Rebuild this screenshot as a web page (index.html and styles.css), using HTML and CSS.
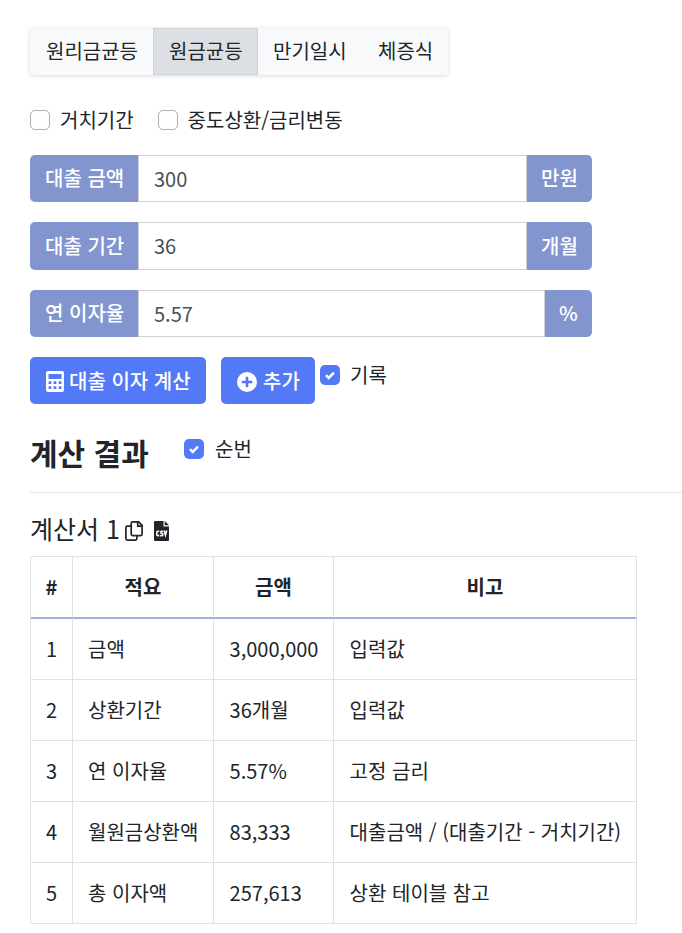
FILE: index.html
```html
<!DOCTYPE html>
<html lang="ko">
<head>
<meta charset="utf-8">
<title>대출 이자 계산기</title>
<link rel="stylesheet" href="styles.css">
</head>
<body>
<main class="page">
  <nav class="tabs">
    <a class="tab tab-first">원리금균등</a>
    <a class="tab active">원금균등</a>
    <a class="tab">만기일시</a>
    <a class="tab tab-last">체증식</a>
  </nav>

  <div class="options">
    <label class="check"><span class="box"></span>거치기간</label>
    <label class="check"><span class="box"></span>중도상환/금리변동</label>
  </div>

  <form class="fields">
    <div class="field"><span class="addon">대출 금액</span><span class="value">300</span><span class="addon unit">만원</span></div>
    <div class="field field-tall"><span class="addon">대출 기간</span><span class="value">36</span><span class="addon unit">개월</span></div>
    <div class="field"><span class="addon">연 이자율</span><span class="value">5.57</span><span class="addon unit unit-small">%</span></div>
  </form>

  <div class="actions">
    <button class="btn btn-calc" type="button">
      <svg class="icon-calc" viewBox="0 0 18 21"><path fill="#fff" fill-rule="evenodd" d="M2 0h14a2 2 0 0 1 2 2v17a2 2 0 0 1-2 2H2a2 2 0 0 1-2-2V2a2 2 0 0 1 2-2zM2.500 3v5h13V3zM2.600 10.300v2.700h2.700v-2.700zm5 0v2.700h2.700v-2.700zm5.100 0v2.700h2.700v-2.700zM2.600 15.300v2.700h2.700v-2.700zm5 0v2.700h2.700v-2.700zm5.100 0v2.700h2.700v-2.700z"/></svg>
      <span>대출 이자 계산</span>
    </button>
    <button class="btn btn-add" type="button">
      <svg class="icon-add" viewBox="0 0 20 20"><circle cx="10" cy="10" r="10" fill="#fff"/><path d="M10 4.700v10.600M4.700 10h10.600" stroke="#5379f6" stroke-width="2.600"/></svg>
      <span>추가</span>
    </button>
    <label class="check check-log"><span class="box checked"><svg viewBox="0 0 20 20"><path d="M6 10.200l2.700 2.700L14 7.600"/></svg></span>기록</label>
  </div>

  <header class="result-head">
    <h2>계산 결과</h2>
    <label class="check"><span class="box checked"><svg viewBox="0 0 20 20"><path d="M6 10.200l2.700 2.700L14 7.600"/></svg></span>순번</label>
  </header>

  <div class="caption">
    <span>계산서 1</span>
    <svg class="icon-copy" viewBox="0 0 18 20" fill="none" stroke="#212529" stroke-width="1.700" stroke-linejoin="round"><path d="M7.700.9h6l3.400 3.400v8.800a1.500 1.500 0 0 1-1.500 1.500H7.700a1.500 1.500 0 0 1-1.500-1.500V2.400A1.500 1.500 0 0 1 7.700.9z"/><path d="M12.700 1v4.200h4.200"/><path d="M6.200 5.200H2.400A1.500 1.500 0 0 0 .9 6.700v10.900a1.500 1.500 0 0 0 1.500 1.500h8a1.500 1.500 0 0 0 1.500-1.500v-3"/></svg>
    <svg class="icon-csv" viewBox="0 0 15 20"><path fill="#212529" d="M1 0h8.500v5.500H15V19a1 1 0 0 1-1 1H1a1 1 0 0 1-1-1V1a1 1 0 0 1 1-1z"/><path fill="#212529" d="M10.700 0L15 4.300h-4.300z"/><path fill="none" stroke="#fff" stroke-width="1.600" d="M5.200 10.200H4q-1.200 0-1.200 1.200v2q0 1.200 1.200 1.200h1.200M9 10.200H7.600q-.9 0-.9 1t.9 1.100h.3q.9 0 .9 1.100t-.9 1.200H6.200M10.100 9.500l1.300 4.500L12.700 9.500"/></svg>
  </div>

  <table class="sheet">
    <colgroup><col class="c-no"><col class="c-item"><col class="c-amount"><col class="c-note"></colgroup>
    <thead><tr><th>#</th><th>적요</th><th>금액</th><th>비고</th></tr></thead>
    <tbody>
      <tr><td>1</td><td>금액</td><td>3,000,000</td><td>입력값</td></tr>
      <tr><td>2</td><td>상환기간</td><td>36개월</td><td>입력값</td></tr>
      <tr><td>3</td><td>연 이자율</td><td>5.57%</td><td>고정 금리</td></tr>
      <tr><td>4</td><td>월원금상환액</td><td>83,333</td><td>대출금액 / (대출기간 - 거치기간)</td></tr>
      <tr><td>5</td><td>총 이자액</td><td>257,613</td><td>상환 테이블 참고</td></tr>
    </tbody>
  </table>
</main>
</body>
</html>
```
FILE: styles.css
```css
* { box-sizing: border-box; }
body {
  margin: 0;
  background: #fff;
  color: #212529;
  font: 20px/30px "Noto Sans CJK KR", sans-serif;
  overflow: hidden;
}
.page { padding: 28px 0 0 30px; }

.tabs {
  display: flex;
  width: 418px;
  height: 47px;
  background: #f8f9fb;
  box-shadow: 0 1px 4px rgba(33, 37, 41, .17);
}
.tab {
  width: 105px;
  padding: 8px 0 0 15px;
  white-space: nowrap;
}
.tab-first { width: 123px; padding-left: 16px; }
.tab-last { width: 85px; padding-left: 15px; }
.active { background: #dcdfe4; border: 1px solid #d1d4da; padding-top: 7px; }

.options { display: flex; gap: 24px; margin-top: 30px; }
.check { display: flex; align-items: center; gap: 10px; height: 30px; white-space: nowrap; }
.box {
  width: 20px;
  height: 20px;
  border: 1px solid #adb0b7;
  border-radius: 5px;
  background: #fff;
}
.checked { border: 0; background: #5379f6; }
.box svg { display: block; width: 20px; height: 20px; fill: none; stroke: #fff; stroke-width: 2.5; }

.fields { display: flex; flex-direction: column; gap: 20px; width: 562px; margin-top: 20px; }
.field { display: flex; height: 47px; }
.field-tall { height: 48px; }
.addon {
  width: 108px;
  padding: 8px 0 0 15px;
  background: #8295cf;
  color: #fff;
  font-weight: 500;
  border-radius: 5px 0 0 5px;
  white-space: nowrap;
}
.field-tall .addon { padding-top: 9px; }
.unit { width: 65px; padding-left: 14px; border-radius: 0 5px 5px 0; }
.unit-small { width: 47px; }
.value {
  flex: 1;
  padding: 8px 15px 0;
  border: 1px solid #cfd1d6;
  color: #495057;
}

.actions { display: flex; margin-top: 20px; }
.btn {
  display: flex;
  align-items: center;
  height: 47px;
  padding: 0 15px 0 16px;
  border: 0;
  border-radius: 5px;
  background: #5379f6;
  color: #fff;
  font: 500 20px/30px "Noto Sans CJK KR", sans-serif;
  white-space: nowrap;
}
.btn-calc { width: 176px; gap: 5px; }
.btn-add { width: 94px; margin-left: 15px; gap: 6px; }
.icon-calc { width: 18px; height: 21px; flex: none; margin-top: 2px; }
.icon-add { width: 20px; height: 20px; flex: none; margin-top: 2px; }
.check-log { margin: 3px 0 0 5px; }

.result-head {
  display: flex;
  align-items: flex-start;
  gap: 36px;
  height: 63px;
  margin-top: 26px;
  border-bottom: 1px solid #e1e3e6;
}
h2 { margin: 2px 0 0; font-size: 30px; line-height: 40px; font-weight: 700; width: 118px; white-space: nowrap; }
.result-head .check { margin-top: 4px; gap: 11px; }

.caption { display: flex; height: 63px; padding-top: 20px; font-size: 25px; line-height: 30px; }
.icon-copy { width: 18px; height: 20px; margin: 8px 0 0 5px; }
.icon-csv { width: 15px; height: 20px; margin: 8px 0 0 11px; }

.sheet { width: 607px; table-layout: fixed; border-collapse: separate; border-spacing: 0; border-top: 1px solid #dee2e6; border-left: 1px solid #dee2e6; }
.c-no { width: 42px; }
.c-item { width: 141px; }
.c-amount { width: 120px; }
.c-note { width: 303px; }
th, td {
  height: 61px;
  padding: 0 0 0 15px;
  border-right: 1px solid #dee2e6;
  border-bottom: 1px solid #dee2e6;
  text-align: left;
  white-space: nowrap;
}
td:nth-child(n+3) { padding-left: 15.6px; }
th { height: 62px; padding: 0; border-bottom: 2px solid #a2b0dc; text-align: center; }
```
